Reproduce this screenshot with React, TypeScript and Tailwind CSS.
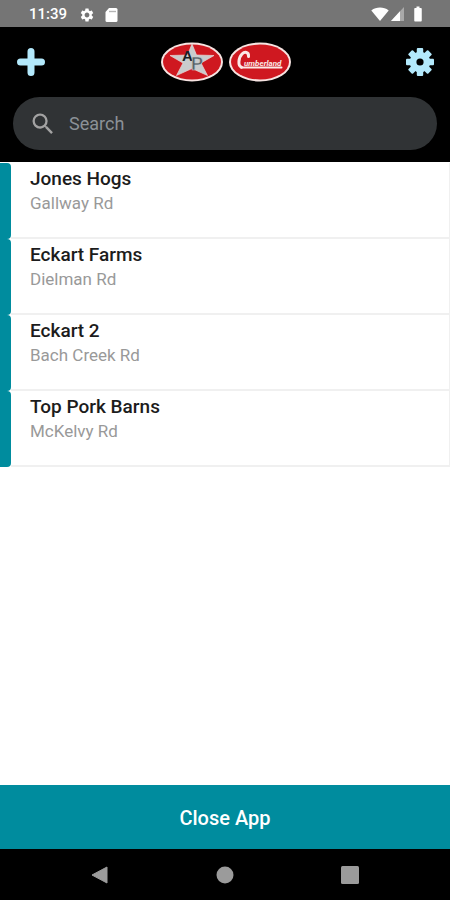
import { useState } from "react";
import { MdBatteryFull, MdSearch, MdSettings } from "react-icons/md";

type Farm = {
  name: string;
  road: string;
};

const farms: Farm[] = [
  { name: "Jones Hogs", road: "Gallway Rd" },
  { name: "Eckart Farms", road: "Dielman Rd" },
  { name: "Eckart 2", road: "Bach Creek Rd" },
  { name: "Top Pork Barns", road: "McKelvy Rd" },
];

function StatusBar() {
  return (
    <div className="flex h-[27px] shrink-0 items-center justify-between bg-[#757575] pl-[29px] pr-[23px] text-white">
      <div className="flex items-center pt-0.5">
        <span className="text-[15px] leading-none font-medium">11:39</span>
        <MdSettings className="ml-3 size-4" />
        <svg className="ml-2 h-4 w-4" viewBox="0 0 16 16">
          <path
            d="M6 1H13a1.500 1.500 0 0 1 1.500 1.500v11A1.500 1.500 0 0 1 13 15H4a1.500 1.500 0 0 1-1.500-1.500V5z"
            fill="currentColor"
          />
          <path d="M6 4.500h7" stroke="#b5b5b5" strokeWidth="1.400" />
        </svg>
      </div>
      <div className="flex items-center">
        <svg className="h-4 w-[18px]" viewBox="0 0 18 16">
          <path d="M9 15 .3 4.400C5.400.6 12.600.6 17.700 4.400z" fill="currentColor" />
        </svg>
        <svg className="size-4" viewBox="0 0 16 16">
          <path d="M15 1v14H2z" fill="#a9a9a9" />
          <path d="M11 5.300V15H2z" fill="currentColor" />
        </svg>
        <MdBatteryFull className="ml-1 size-[18px]" />
      </div>
    </div>
  );
}

function ApLogo() {
  return (
    <svg className="h-10 w-[62px]" viewBox="0 0 62 40" role="img" aria-label="AP">
      <ellipse cx="31" cy="20" rx="31" ry="19.500" fill="#f7e4e2" />
      <ellipse cx="31" cy="20" rx="29" ry="17.500" fill="#cf1820" />
      <path
        d="M31 2l4.500 11 17.500.5-13 7.500 6.500 12.500-15.500-7-15.500 7 6.500-12.500L9 13.500l17.500-.5z"
        fill="#c9cccd"
        stroke="#e9d4d2"
        strokeWidth="0.700"
      />
      <text x="21" y="19" fontSize="15" fontWeight="700" fill="#1b2024" className="font-['Liberation_Sans',sans-serif]">
        A
      </text>
      <text x="30" y="28" fontSize="18" fontWeight="700" fill="#59636a" stroke="#c9cccd" strokeWidth="0.500" className="font-['Liberation_Sans',sans-serif]">
        P
      </text>
    </svg>
  );
}

function CumberlandLogo() {
  return (
    <svg className="h-10 w-[62px]" viewBox="0 0 62 40" role="img" aria-label="Cumberland">
      <ellipse cx="31" cy="20" rx="31" ry="19.500" fill="#f7e4e2" />
      <ellipse cx="31" cy="20" rx="29" ry="17.500" fill="#cf1820" />
      <path
        d="M19.500 14.500c.5-5-4-5-6.500-2.500-3.500 3.500-4.500 12-.5 13.200"
        fill="none"
        stroke="#fbe9e7"
        strokeWidth="3"
        strokeLinecap="round"
      />
      <path d="M12 25.500h40.500" stroke="#fbe9e7" strokeWidth="2" strokeLinecap="round" />
      <text x="15" y="24" fontSize="8" fontWeight="700" fontStyle="italic" fill="#fbe9e7" className="font-[Roboto,sans-serif]">
        umberland
      </text>
    </svg>
  );
}

function GearIcon() {
  return (
    <svg className="size-7" viewBox="0 0 28 28">
      <g fill="#b3e9fc">
        {[0, 45, 90, 135].map((angle) => (
          <rect key={angle} x="10.800" y="0" width="6.400" height="28" rx="1" transform={`rotate(${angle} 14 14)`} />
        ))}
        <circle cx="14" cy="14" r="10.300" />
      </g>
      <circle cx="14" cy="14" r="3.600" fill="#000" />
    </svg>
  );
}

function Header({ query, onQueryChange }: { query: string; onQueryChange: (value: string) => void }) {
  return (
    <header className="shrink-0 bg-black pb-3">
      <div className="flex h-[70px] items-center justify-between pr-4 pl-[17px]">
        <button type="button" aria-label="Add farm">
          <svg className="size-7" viewBox="0 0 28 28">
            <path d="M14 3.500v21M3.500 14h21" stroke="#b3e9fc" strokeWidth="7" strokeLinecap="round" />
          </svg>
        </button>
        <div className="flex items-center gap-1.5">
          <ApLogo />
          <CumberlandLogo />
        </div>
        <button type="button" aria-label="Settings">
          <GearIcon />
        </button>
      </div>
      <label className="mx-[13px] flex h-[53px] items-center rounded-full bg-[#303335] pl-4">
        <MdSearch className="size-7 text-[#a3a3a3]" />
        <input
          type="text"
          aria-label="Search"
          placeholder="Search"
          value={query}
          onChange={(e) => onQueryChange(e.target.value)}
          className="ml-3 min-w-0 flex-1 bg-transparent text-lg text-white outline-none placeholder:text-[#8b9197]"
        />
      </label>
    </header>
  );
}

function FarmRow({ farm }: { farm: Farm }) {
  return (
    <li className="flex h-[76px]">
      <div className="w-[11px] shrink-0 rounded-r-sm bg-[#008c9e]" />
      <div className="flex-1 border-r border-b-2 border-[#f0f0f0] pt-[3px] pl-[19px]">
        <div className="text-[19px] leading-[25px] font-medium text-[#1c1c1c]">{farm.name}</div>
        <div className="text-[17px] leading-[25px] text-[#999]">{farm.road}</div>
      </div>
    </li>
  );
}

export default function App() {
  const [query, setQuery] = useState("");
  const visible = farms.filter((farm) => farm.name.toLowerCase().includes(query.toLowerCase()));

  return (
    <div className="flex min-h-screen flex-col bg-white font-[Roboto,sans-serif]">
      <StatusBar />
      <Header query={query} onQueryChange={setQuery} />
      <ul className="flex-1 pt-px">
        {visible.map((farm) => (
          <FarmRow key={farm.name} farm={farm} />
        ))}
      </ul>
      <button type="button" className="h-16 shrink-0 bg-[#008c9e] pt-0.5 text-xl font-medium text-white">
        Close App
      </button>
      {/* Android navigation */}
      <nav className="flex h-[51px] shrink-0 items-center justify-around bg-black px-[38px] text-[#9b9b9b]">
        <button type="button" aria-label="Back">
          <svg className="size-[18px]" viewBox="0 0 18 18">
            <path d="M16 1v16L1 9z" fill="currentColor" stroke="currentColor" strokeLinejoin="round" />
          </svg>
        </button>
        <button type="button" aria-label="Home">
          <svg className="size-[18px]" viewBox="0 0 18 18">
            <circle cx="9" cy="9" r="8.500" fill="currentColor" />
          </svg>
        </button>
        <button type="button" aria-label="Recent apps">
          <svg className="size-[18px]" viewBox="0 0 18 18">
            <rect width="18" height="18" rx="1.500" fill="currentColor" />
          </svg>
        </button>
      </nav>
    </div>
  );
}
